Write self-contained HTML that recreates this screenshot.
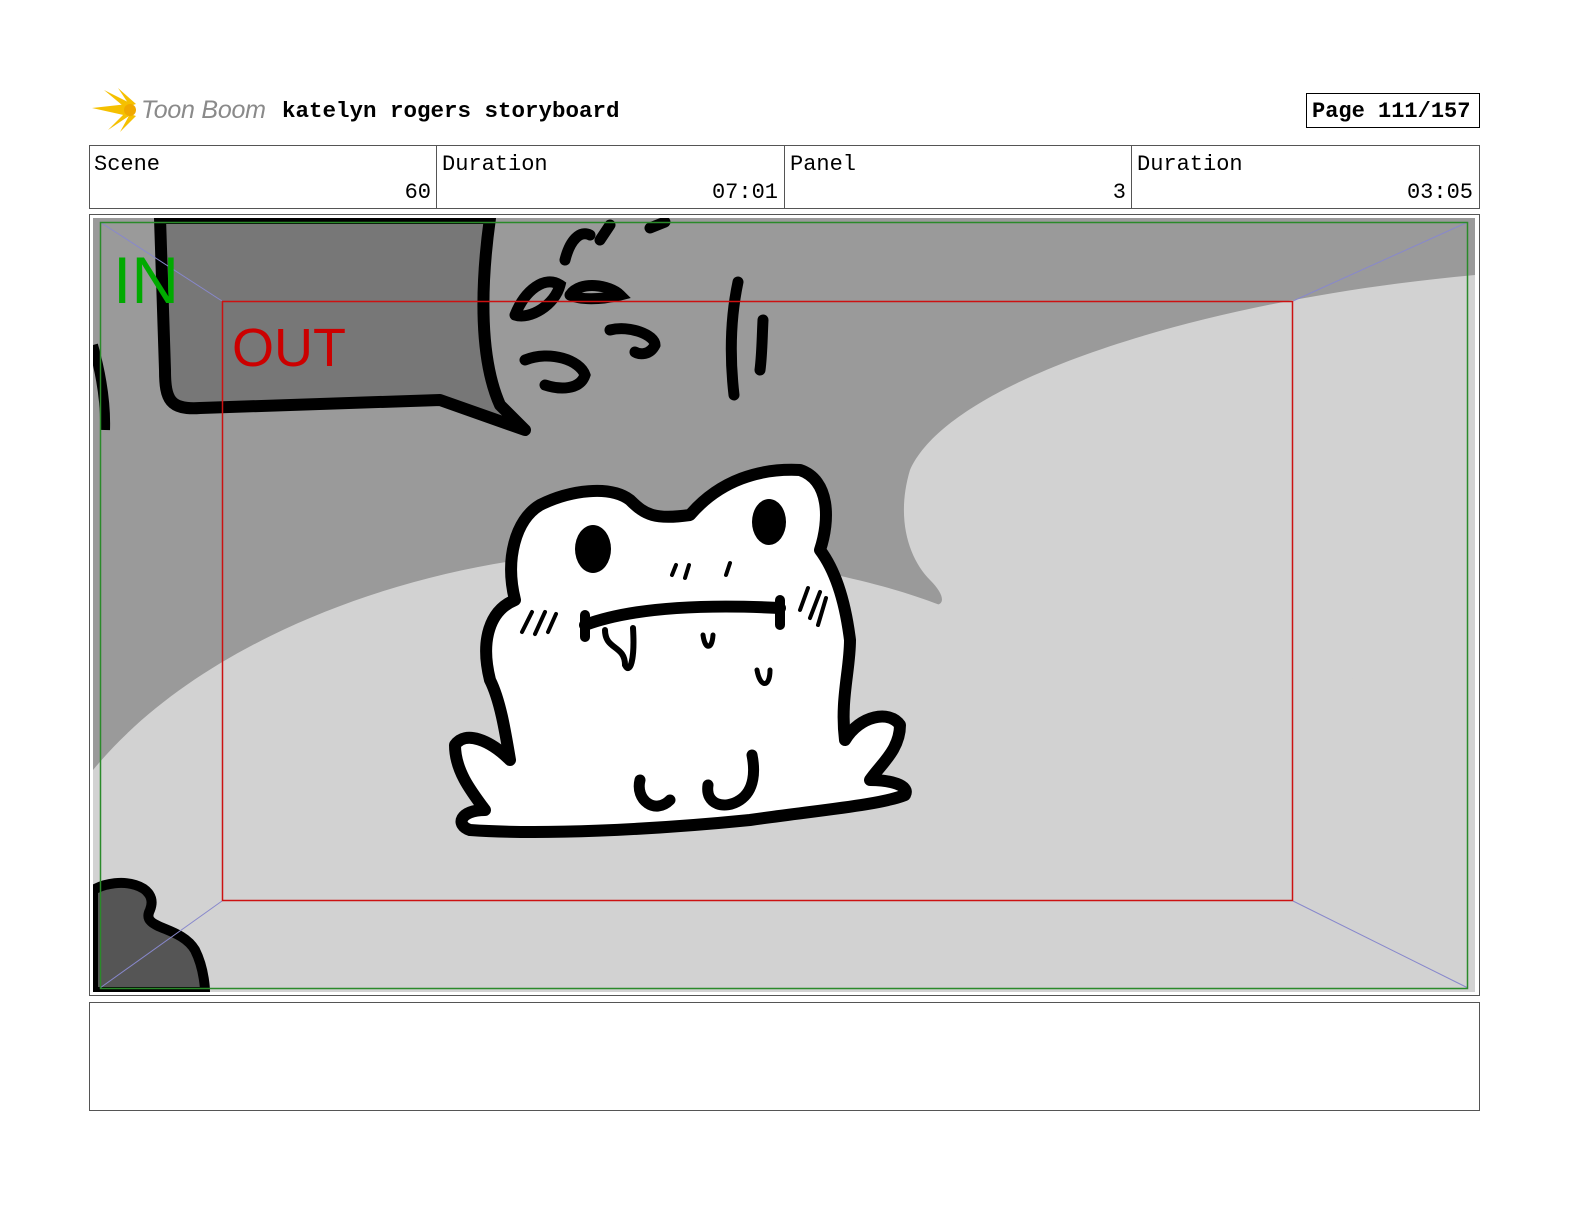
<!DOCTYPE html>
<html><head><meta charset="utf-8"><style>
body{margin:0;background:#fff;width:1584px;height:1224px;position:relative;overflow:hidden;font-family:"Liberation Mono",monospace}
.a{position:absolute}
</style></head><body>
<svg class="a" style="left:0;top:0" width="1584" height="1224" viewBox="0 0 1584 1224">
<g fill="#f5c000">
<path d="M92,108 L128,104 L136,110 L128,116 Z"/>
<path d="M104,90 L132,104 L128,110 Z"/>
<path d="M108,130 L132,114 L128,110 Z"/>
<path d="M118,88 L136,104 L130,106 Z"/>
<path d="M120,132 L136,116 L130,114 Z"/>
<circle cx="130" cy="110" r="6" fill="#f0a800"/>
</g>
<text x="141" y="118" font-family="Liberation Sans" font-style="italic" font-size="25" fill="#8a8a8a" textLength="125">Toon Boom</text>
<text x="282" y="117" font-family="Liberation Mono" font-weight="bold" font-size="22.5" fill="#000">katelyn rogers storyboard</text>
<rect x="1306.5" y="93.5" width="173" height="34" fill="none" stroke="#000"/>
<text x="1312" y="117" font-family="Liberation Mono" font-weight="bold" font-size="22">Page 111/157</text>
<rect x="89.5" y="145.5" width="1390" height="63" fill="none" stroke="#555"/>
<line x1="436.5" y1="145" x2="436.5" y2="209" stroke="#555"/>
<line x1="784.5" y1="145" x2="784.5" y2="209" stroke="#555"/>
<line x1="1131.5" y1="145" x2="1131.5" y2="209" stroke="#555"/>
<g font-family="Liberation Mono" font-size="22" fill="#000">
<text x="94" y="170">Scene</text><text x="431" y="198" text-anchor="end">60</text>
<text x="442" y="170">Duration</text><text x="778" y="198" text-anchor="end">07:01</text>
<text x="790" y="170">Panel</text><text x="1126" y="198" text-anchor="end">3</text>
<text x="1137" y="170">Duration</text><text x="1473" y="198" text-anchor="end">03:05</text>
</g>
<rect x="89.5" y="214.5" width="1390" height="781" fill="none" stroke="#555"/>
<rect x="89.5" y="1002.5" width="1390" height="108" fill="none" stroke="#555"/>
<clipPath id="c"><rect x="93" y="218" width="1382" height="774"/></clipPath>
<g clip-path="url(#c)">
<rect x="93" y="218" width="1382" height="774" fill="#9a9a9a"/>
<path d="M93,770 C200,640 400,570 560,555 C700,545 850,570 940,605 L1475,600 L1475,992 L93,992 Z" fill="#d2d2d2"/>
<path d="M1475,275 C1200,300 950,380 910,470 C895,520 910,560 930,580 C945,595 945,605 935,605 L1475,700 Z" fill="#d2d2d2"/>
<path d="M160,218 L490,218 C480,290 480,360 500,405 L525,430 L440,400 L200,408 C170,410 165,400 165,370 Z" fill="#777" stroke="#000" stroke-width="12" stroke-linejoin="round"/>
<path d="M93,345 C100,370 106,400 105,430" stroke="#000" stroke-width="10" fill="none"/>
<path d="M93,890 C120,875 160,885 150,910 C140,930 180,925 195,950 C205,970 205,992 205,992 L93,992 Z" fill="#555" stroke="#000" stroke-width="10"/>
<g stroke="#000" stroke-width="11" stroke-linecap="round" fill="none">
<path d="M565,260 C570,240 580,230 590,235"/><path d="M600,240 L610,225"/><path d="M650,228 L665,222"/>
<path d="M515,315 C525,290 545,275 560,285 C555,305 530,320 515,315"/>
<path d="M570,295 C580,280 610,285 620,295 C600,300 580,300 570,295"/>
<path d="M525,360 C550,350 580,360 585,375 C580,390 560,390 545,385"/>
<path d="M610,330 C630,325 655,335 655,345 C650,355 640,355 635,352"/>
<path d="M738,282 C730,320 730,360 734,395"/><path d="M763,320 C762,340 762,355 760,370"/>
</g>
<path d="M515,600 C505,560 515,520 540,505 C570,490 610,485 630,500 C645,515 655,520 690,515 C720,480 760,468 800,470 C830,480 830,520 820,550 C835,570 845,600 850,640 C850,670 840,700 845,740 C860,715 890,710 900,725 C900,750 880,765 870,780 C890,780 910,785 905,795 C880,805 820,810 750,820 C650,830 540,835 470,830 C455,825 460,810 485,810 C470,790 455,770 455,745 C465,730 490,740 510,760 C505,730 500,700 490,680 C480,640 490,610 515,600 Z" fill="#fff" stroke="#000" stroke-width="12" stroke-linejoin="round"/>
<ellipse cx="593" cy="549" rx="18" ry="24" fill="#000"/>
<ellipse cx="769" cy="522" rx="17" ry="23" fill="#000"/>
<g stroke="#000" stroke-linecap="round" fill="none">
<path d="M585,625 C620,612 680,603 780,608" stroke-width="12"/>
<path d="M585,615 L585,637 M780,600 L780,625" stroke-width="10"/>
<path d="M605,630 C605,650 625,645 625,665 C630,675 635,660 633,628" stroke-width="6"/>
<path d="M703,635 C705,650 712,650 713,635 M757,670 C760,688 770,688 770,670" stroke-width="5"/>
<path d="M640,780 C635,800 655,815 670,800 M708,785 C705,805 725,810 740,800 C755,790 755,770 752,755" stroke-width="11"/>
<path d="M672,575 L676,565 M685,578 L689,565 M726,575 L730,563" stroke-width="4"/>
<path d="M522,632 L532,612 M535,634 L545,612 M548,632 L556,614 M800,610 L808,588 M810,618 L820,592 M818,625 L826,598" stroke-width="4"/>
</g>
</g>
<g fill="none" stroke="#8888cc" stroke-width="1">
<line x1="100" y1="222" x2="222" y2="301"/><line x1="1468" y1="222" x2="1293" y2="301"/>
<line x1="100" y1="988" x2="222" y2="901"/><line x1="1468" y1="988" x2="1293" y2="901"/>
</g>
<rect x="100.5" y="222.5" width="1367" height="766" fill="none" stroke="#2a8a2a" stroke-width="1.5"/>
<rect x="222.5" y="301.5" width="1070" height="599" fill="none" stroke="#cc1111" stroke-width="1.5"/>
<text x="113" y="303" font-family="Liberation Sans" font-size="66" fill="#00aa00">IN</text>
<text x="232" y="366" font-family="Liberation Sans" font-size="54" fill="#cc0000">OUT</text>
</svg>
</body></html>
